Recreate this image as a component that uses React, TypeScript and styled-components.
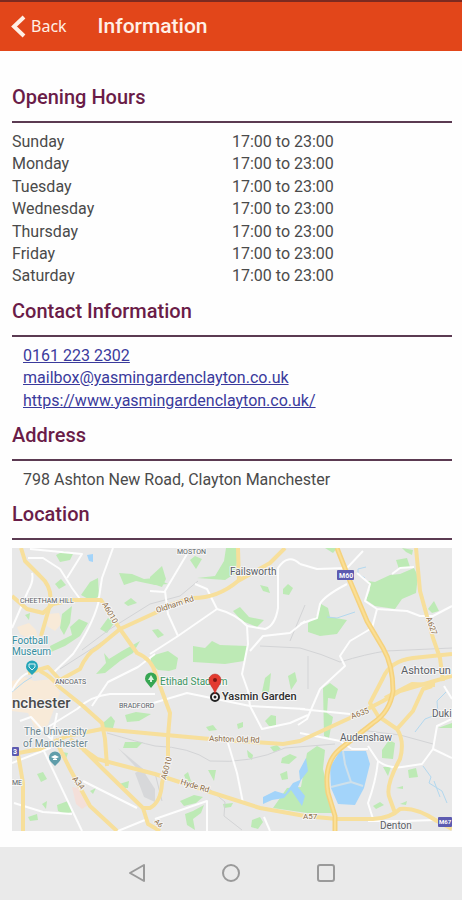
import React from "react";
import styled, { createGlobalStyle } from "styled-components";

const GlobalStyle = createGlobalStyle`
  * { box-sizing: border-box; }
  body { margin: 0; background: #fff; font-family: Roboto, "Liberation Sans", sans-serif; }
`;

const Page = styled.div`
  min-height: 100vh;
  display: flex;
  flex-direction: column;
  background: #fefefe;
`;

const Header = styled.header`
  display: flex;
  align-items: center;
  gap: 31px;
  height: 51px;
  padding: 0 11px 2px;
  border-top: 2px solid #7c2a20;
  background: #e2461a;
  color: #fff0e6;
`;

const BackButton = styled.button`
  display: flex;
  align-items: center;
  gap: 5px;
  padding: 0;
  border: 0;
  background: none;
  color: inherit;
  font: 400 16px/24px "Noto Sans", sans-serif;
  cursor: pointer;
`;

const Title = styled.h1`
  margin: 0;
  font-size: 21px;
  line-height: 24px;
  font-weight: 500;
`;

const Main = styled.main`
  flex: 1;
  padding: 23px 10px 16px 12px;
`;

const SectionTitle = styled.h2`
  margin: 0 0 8px;
  padding: 11px 0 12px;
  border-bottom: 2px solid #5b3a52;
  color: #6a1c48;
  font-size: 20px;
  line-height: 24px;
  font-weight: 500;
`;

const Hours = styled.table`
  width: 100%;
  table-layout: fixed;
  border-collapse: collapse;
  color: #4a4a4a;
  font-size: 16px;
  line-height: 1.4;
`;

const Cell = styled.td`
  padding: 0;
`;

const Day = styled.th`
  padding: 0;
  text-align: left;
  font-weight: 400;
`;

const Details = styled.address`
  display: flex;
  flex-direction: column;
  align-items: flex-start;
  padding-left: 11px;
  color: #4a4a4a;
  font-size: 16px;
  line-height: 1.4;
  font-style: normal;
`;

const DetailLink = styled.a`
  color: #3a3a9c;
  text-decoration: underline;
`;

const Map = styled.svg`
  display: block;
  width: 100%;
  height: auto;
`;

const Label = styled.text<{ $size?: number; $color?: string; $weight?: number }>`
  font-family: Roboto, sans-serif;
  font-size: ${(p) => p.$size ?? 10}px;
  font-weight: ${(p) => p.$weight ?? 400};
  fill: ${(p) => p.$color ?? "#5b5f66"};
  stroke: #f6f6f6;
  stroke-width: 2px;
  stroke-linejoin: round;
  paint-order: stroke;
`;

const NavBar = styled.nav`
  display: flex;
  justify-content: center;
  gap: 71px;
  padding: 14px 0 15px;
  background: #eaeaea;
`;

const NavButton = styled.button`
  display: block;
  width: 24px;
  height: 24px;
  padding: 0;
  border: 0;
  background: none;
  color: #9a9a9a;
  cursor: pointer;
`;

const days = ["Sunday", "Monday", "Tuesday", "Wednesday", "Thursday", "Friday", "Saturday"];

const parks = [
  "56,554 64,550 73,553 70,559 60,561",
  "55,583 61,578 66,584 59,588",
  "81,594 90,581 98,577 99,595 92,600",
  "119,572 132,573 144,578 155,577 168,583 155,584 136,580 124,584",
  "124,602 131,597 137,602 128,605",
  "62,613 72,605 70,622 64,634 60,627",
  "50,645 72,634 70,626 79,618 88,622 80,635 65,645 51,651",
  "100,628 108,617 115,621 107,632",
  "96,673 106,662 104,652 109,658 122,650 140,640 133,652 120,660 105,672",
  "25,614 30,612 29,619",
  "150,576 162,565 166,578 162,586 150,582",
  "190,559 195,555 202,558 196,568",
  "197,577 215,575 224,560 226,547 238,547 236,572 225,579 211,578",
  "260,584 268,586 270,592 263,590",
  "283,588 288,583 293,587 289,594 283,593",
  "233,610 240,606 249,616 264,619 257,626 242,620",
  "152,629 158,628 164,634 158,637",
  "193,645 205,647 212,640 220,644 248,645 244,660 225,663 193,661",
  "151,655 168,650 178,657 176,668 169,670 158,669 151,663",
  "325,547 337,547 333,552",
  "396,559 407,557 410,566 399,568",
  "368,580 375,581 390,574 400,573 414,567 418,575 416,592 402,598 395,608 375,605 366,599 370,589",
  "402,547 413,549 412,554 406,551",
  "428,608 434,600 439,610 432,612",
  "308,622 318,614 321,603 328,607 330,616 347,619 337,633 320,635 308,631",
  "323,687 330,682 338,688 335,698 328,697 327,712 333,716 329,737 324,735",
  "265,677 271,672 269,691 262,691",
  "288,675 295,671 297,680 291,689",
  "103,722 111,715 115,720 113,727 104,728",
  "125,714 136,711 151,713 139,720 127,721",
  "125,741 143,741 137,747 123,747",
  "37,773 43,771 47,778 41,781",
  "57,804 68,800 72,811 65,813 58,810",
  "42,803 47,800 46,808",
  "28,816 37,813 38,819 30,820",
  "119,783 129,780 128,787 120,787",
  "90,790 96,787 93,793",
  "62,751 68,752 66,758",
  "206,726 213,724 217,729 209,730",
  "237,723 243,721 243,726 238,728",
  "265,720 271,714 276,715 276,726 269,725",
  "247,749 253,754 252,759 248,756",
  "282,757 290,753 297,756 289,763 281,762",
  "270,746 277,744 281,748 274,751",
  "184,774 188,771 191,780 197,784 188,784",
  "208,769 216,769 214,780",
  "180,800 194,794 203,796 196,802 184,805",
  "185,813 193,810 204,804 201,812 193,818 195,829 187,824",
  "223,803 233,802 231,806 224,807",
  "252,819 260,816 263,821 258,828 251,826",
  "280,773 287,770 288,778 282,779",
  "273,807 287,787 301,786 307,752 317,745 325,749 323,768 327,784 332,812 307,812",
  "382,749 389,739 395,742 393,758 382,757",
  "383,766 391,766 388,775",
  "408,769 416,767 418,776 409,777",
  "373,805 380,801 384,804 376,808",
  "396,787 403,785 403,788",
  "400,803 407,800 406,804",
  "438,727 452,722 452,727",
];

const minorRoads = [
  "M28 557L43 557L60 568L72 587L80 598",
  "M32 572Q34 580 28 590L12 627",
  "M30 548L82 553L67 577",
  "M113 547L102 577L98 603Q92 625 73 653L53 672",
  "M12 690Q22 670 33 672",
  "M155 653L138 666L108 681L92 705",
  "M187 553L165 590L168 613L178 635",
  "M150 590L165 591",
  "M150 653L178 635L217 608L207 588L195 583",
  "M217 608Q236 613 247 625L248 643L242 673L248 690L250 705L262 728L290 722L308 714",
  "M305 620L290 632L263 635L250 650",
  "M300 563Q288 552 278 567V607Q275 625 265 628L247 625",
  "M300 563L317 568L347 567L363 550",
  "M347 583Q324 595 320 603L317 617L300 623",
  "M357 572L370 583L365 600L377 608L407 610L420 615L433 615L452 605",
  "M377 608L372 627L350 640L340 655L345 665L320 688L307 718L298 724",
  "M392 573L400 567L414 566",
  "M300 708L350 713",
  "M300 732L340 740L352 748H368",
  "M368 745L378 760Q389 768 402 766L422 763L433 748L437 725L452 718",
  "M433 748L452 757",
  "M378 760Q376 780 368 802L373 818",
  "M43 748L82 830",
  "M83 780L137 807",
  "M14 802L43 811L72 813",
  "M12 762L50 747L57 712",
  "M48 726L77 708Q91 695 110 693L155 693",
  "M150 703L187 692L250 705L305 708",
  "M228 742L237 772L243 802",
  "M155 818L207 800V830",
  "M118 830L145 819",
  "M20 720L31 716L51 738",
  "M270 830L264 816",
  "M368 820H405L435 819",
  "M444 685L452 698",
];

const mainRoads = [
  "M21 547L25 560L40 575Q53 586 50 604L41 635",
  "M12 595L27 608L43 612L53 603L73 599L101 599L120 628L137 652Q152 658 156 674L170 712L168 735V758L162 782Q161 801 150 807L143 807",
  "M28 672L48 666L60 679L80 668Q87 652 97 647L120 628L155 612Q168 603 193 597Q218 597 238 580L270 562L285 547",
  "M238 547L239 580",
  "M416 547L420 590L433 637L440 657L443 680",
  "M452 653L413 657Q390 660 383 677L370 702L378 715L397 728Q405 740 400 758Q384 787 390 798L395 812",
  "M452 675L400 690L383 700L350 717L300 740L283 743L210 738L155 733L102 728L67 735L40 748L13 753",
  "M432 685L423 688L413 710L397 728",
  "M435 684L412 683L385 697",
  "M58 685L83 705L102 722L105 738L107 765",
  "M40 670Q52 676 58 685",
  "M83 748L97 758L155 773L207 790L260 807L305 815L337 818L373 818Q391 817 400 808Q416 806 437 820L452 828",
  "M70 738L83 748L103 768L143 807L148 823L160 830",
  "M55 738L70 768L90 805L117 830",
  "M18 753L23 782V830",
];

const ring = "M337 547L350 580L367 620L383 647Q393 664 393 690Q390 711 373 722L340 748Q323 762 328 792L335 815V830";

function AreaMap() {
  return (
    <Map viewBox="12 547 440 283" role="img" aria-label="Map showing Yasmin Garden">
      <rect x="12" y="547" width="440" height="283" fill="#e8e8e8" />
      <g fill="#f8ead8">
        <path d="M48 613L59 612L62 622L55 630L47 625Z" />
        <path d="M17 626L29 622L36 629L39 643L20 633Z" />
        <path d="M12 680L25 676L34 680L52 678L60 692L48 724L36 729L28 712L12 710Z" />
      </g>
      <path d="M72 786L82 788L88 804L82 808L76 803Z" fill="#f4dfd9" />
      <g fill="#d7d8da">
        <path d="M135 772L142 768L155 788L155 801L144 796Z" />
        <path d="M118 747L147 771L144 775Z" />
      </g>
      <g fill="#bdeab5">
        {parks.map((points) => (
          <polygon key={points} points={points} />
        ))}
      </g>
      <g fill="#a3d4fa">
        <path d="M340 750L366 750L370 763L364 787L355 804L338 803L331 787L330 766Z" />
        <path d="M263 796L275 790L285 793L293 782L300 779L299 770L306 757L308 770L301 779L298 786L305 795L302 805L291 789L284 797L272 799L263 803Z" />
        <path d="M87 554L93 553V561L89 560Z" />
      </g>
      <g fill="none" stroke="#b3d8ef" strokeWidth="1">
        <path d="M366 566L358 568V573L365 577M327 616L337 617L355 611M446 691L437 700L438 713L425 718L415 731M423 765L431 776L429 782L442 790L447 802M434 780L440 796" />
        <path d="M12 691L24 681L32 676" />
      </g>
      <path d="M343 750L345 763L351 781L331 786M351 781L363 785" fill="none" stroke="#cfe0ea" strokeWidth="2" />
      <g fill="none" stroke="#d3d4d6" strokeWidth="1">
        <path d="M82 649L110 628L150 603L180 595L198 580M60 668L110 636" />
        <path d="M260 645L300 647Q322 653 340 661Q366 653 386 650L452 647" />
        <path d="M107 732Q138 741 155 745Q190 746 210 760Q250 763 285 747L335 743M360 729L400 734L433 743" />
        <path d="M155 772L162 800M207 786L225 801L224 815L242 829" />
        <path d="M290 640L305 604M308 655V688" />
      </g>
      <g fill="none" stroke="#fdfdfd" strokeWidth="2" strokeLinejoin="round">
        {minorRoads.map((d) => (
          <path key={d} d={d} />
        ))}
      </g>
      <g fill="none" stroke="#f7df9b" strokeWidth="4" strokeLinejoin="round">
        {mainRoads.map((d) => (
          <path key={d} d={d} />
        ))}
      </g>
      <path d={ring} fill="none" stroke="#f5d27e" strokeWidth="5" />
      <path d={ring} fill="none" stroke="#fbdf95" strokeWidth="2" />

      <Label x="177" y="553" $size={7}>MOSTON</Label>
      <Label x="230" y="574">Failsworth</Label>
      <Label x="20" y="602" $size={7}>CHEETHAM HILL</Label>
      <Label x="55" y="683" $size={7}>ANCOATS</Label>
      <Label x="119" y="707" $size={7}>BRADFORD</Label>
      <Label x="12" y="784" $size={7}>ME</Label>
      <Label x="401" y="673" $size={11}>Ashton-un</Label>
      <Label x="432" y="716">Duki</Label>
      <Label x="340" y="740">Audenshaw</Label>
      <Label x="380" y="828">Denton</Label>
      <Label x="12" y="643" $color="#358e9f">Football</Label>
      <Label x="12" y="654" $color="#358e9f">Museum</Label>
      <Label x="24" y="734" $color="#6c8790">The University</Label>
      <Label x="23" y="746" $color="#6c8790">of Manchester</Label>
      <Label x="160" y="684" $color="#3d9461">Etihad Stadium</Label>
      <Label x="12" y="707" $size={15} $weight={500} $color="#4b4b4b">nchester</Label>
      <g>
        <Label x="157" y="612" $size={8} $color="#8b6a42" transform="rotate(-18 157 612)">Oldham Rd</Label>
        <Label x="102" y="603" $size={8} $color="#8b6a42" transform="rotate(60 102 603)">A6010</Label>
        <Label x="209" y="740" $size={8} $color="#8b6a42" transform="rotate(2 209 740)">Ashton Old Rd</Label>
        <Label x="180" y="783" $size={8} $color="#8b6a42" transform="rotate(17 180 783)">Hyde Rd</Label>
        <Label x="166" y="779" $size={8} $color="#8b6a42" transform="rotate(-75 166 779)">A6010</Label>
        <Label x="72" y="778" $size={8} $color="#8b6a42" transform="rotate(52 72 778)">A34</Label>
        <Label x="154" y="821" $size={7} $color="#8b6a42" transform="rotate(45 154 821)">A6</Label>
        <Label x="352" y="718" $size={8} $color="#8b6a42" transform="rotate(-20 352 718)">A635</Label>
        <Label x="426" y="617" $size={8} $color="#8b6a42" transform="rotate(70 426 617)">A627</Label>
        <Label x="303" y="818" $size={8} $color="#8b6a42">A57</Label>
      </g>
      <g fill="#5d5bb0">
        <rect x="337" y="569" width="17" height="10" rx="1" />
        <rect x="438" y="816" width="14" height="10" rx="1" />
        <rect x="12" y="746" width="7" height="9" rx="1" />
      </g>
      <g fill="#fff" fontFamily="Roboto, sans-serif" fontSize="7" fontWeight="700">
        <text x="339" y="577">M60</text>
        <text x="439" y="823" fontSize="6">M67</text>
        <text x="13" y="753">3</text>
      </g>
      <g transform="translate(32 666)">
        <path d="M0 8L-4 4A6 6 0 1 1 4 4Z" fill="#25a5b8" />
        <path d="M-3 -3H3V0L0 3L-3 0Z" fill="none" stroke="#d8f2f5" />
      </g>
      <g transform="translate(55 757)">
        <path d="M0 8L-4 4A6 6 0 1 1 4 4Z" fill="#609daa" />
        <path d="M-4 -1L0 -3L4 -1L0 1ZM-2 1V2H2V1" fill="#fff" />
      </g>
      <g transform="translate(151 678)">
        <path d="M0 9L-4 4A6 6 0 1 1 4 4Z" fill="#37a653" />
        <path d="M0 -4L3 1H1V3H-1V1H-3Z" fill="#d9f2df" />
      </g>
      <circle cx="215" cy="696" r="4" fill="#fff" stroke="#222" strokeWidth="2" />
      <circle cx="215" cy="696" r="1.5" fill="#222" />
      <path d="M215 693C214 687 209 684 209 679A6 6 0 0 1 221 679C221 684 216 687 215 693Z" fill="#e33b30" stroke="#b92b25" strokeWidth="0.5" />
      <circle cx="215" cy="679" r="2" fill="#7d1714" />
      <Label x="222" y="699" $size={11} $weight={500} $color="#2e2e2e">Yasmin Garden</Label>
    </Map>
  );
}

export default function App() {
  return (
    <>
      <GlobalStyle />
      <Page>
        <Header>
          <BackButton type="button">
            <svg width="15" height="24" viewBox="0 0 15 24" fill="none" stroke="currentColor" strokeWidth="4" aria-hidden="true">
              <path d="M13 3L3 12.500L13 22" />
            </svg>
            Back
          </BackButton>
          <Title>Information</Title>
        </Header>
        <Main>
          <section>
            <SectionTitle>Opening Hours</SectionTitle>
            <Hours>
              <tbody>
                {days.map((day) => (
                  <tr key={day}>
                    <Day scope="row">{day}</Day>
                    <Cell>17:00 to 23:00</Cell>
                  </tr>
                ))}
              </tbody>
            </Hours>
          </section>
          <section>
            <SectionTitle>Contact Information</SectionTitle>
            <Details>
              <DetailLink href="tel:01612232302">0161 223 2302</DetailLink>
              <DetailLink href="mailto:mailbox@yasmingardenclayton.co.uk">mailbox@yasmingardenclayton.co.uk</DetailLink>
              <DetailLink href="https://www.yasmingardenclayton.co.uk/">https://www.yasmingardenclayton.co.uk/</DetailLink>
            </Details>
          </section>
          <section>
            <SectionTitle>Address</SectionTitle>
            <Details>798 Ashton New Road, Clayton Manchester</Details>
          </section>
          <section>
            <SectionTitle>Location</SectionTitle>
            <AreaMap />
          </section>
        </Main>
        <NavBar aria-label="System">
          <NavButton type="button" aria-label="Back">
            <svg width="24" height="24" viewBox="0 0 24 24" fill="none" stroke="currentColor" strokeWidth="2" strokeLinejoin="round">
              <path d="M20 4V20L6 12Z" />
            </svg>
          </NavButton>
          <NavButton type="button" aria-label="Home">
            <svg width="24" height="24" viewBox="0 0 24 24" fill="none" stroke="currentColor" strokeWidth="2">
              <circle cx="12" cy="12" r="8" />
            </svg>
          </NavButton>
          <NavButton type="button" aria-label="Recent apps">
            <svg width="24" height="24" viewBox="0 0 24 24" fill="none" stroke="currentColor" strokeWidth="2">
              <rect x="4" y="4" width="16" height="16" rx="2" />
            </svg>
          </NavButton>
        </NavBar>
      </Page>
    </>
  );
}
